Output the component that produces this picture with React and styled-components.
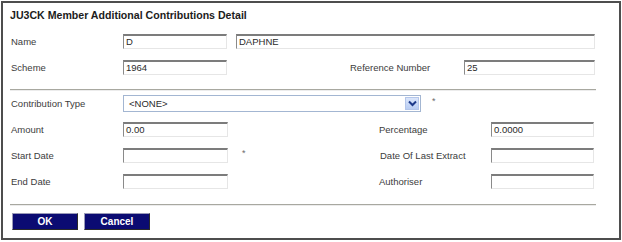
import React from 'react';
import styled, { createGlobalStyle } from 'styled-components';

const GlobalStyle = createGlobalStyle`
  body {
    margin: 0;
    background: #ffffff;
    font-family: "Liberation Sans", Arial, sans-serif;
  }
`;

const Frame = styled.div`
  box-sizing: border-box;
  width: 620px;
  height: 239px;
  margin: 1px 0 0 1px;
  border: 2px solid #4e4e4e;
  padding: 0 0 0 7px;
  background: #ffffff;
`;

const Title = styled.div`
  height: 25px;
  line-height: 25px;
  font-size: 10.6px;
  font-weight: bold;
  color: #1c1c1c;
`;

const Row = styled.div`
  display: flex;
  align-items: center;
  height: ${p => p.h || 26}px;
`;

const Label = styled.div`
  width: ${p => p.w}px;
  flex-shrink: 0;
  font-size: 9.5px;
  color: #3c3c3c;
  padding-left: ${p => p.pl || 1}px;
  box-sizing: border-box;
  white-space: nowrap;
`;

const Input = styled.div`
  box-sizing: border-box;
  width: ${p => p.w}px;
  height: 15px;
  flex-shrink: 0;
  margin-right: ${p => p.mr || 0}px;
  background: #ffffff;
  border-top: 2px solid #7c7c7c;
  border-left: 1px solid #8a8a8a;
  border-right: 1px solid #e6e6e6;
  border-bottom: 1px solid #e6e6e6;
  font-size: 9.5px;
  line-height: 12px;
  padding-left: 2px;
  color: #2a2a2a;
`;

const Select = styled.div`
  box-sizing: border-box;
  width: 298px;
  height: 17px;
  flex-shrink: 0;
  display: flex;
  align-items: center;
  border: 1px solid #a3b6d2;
  background: #ffffff;
  padding: 1px;
`;

const SelectText = styled.div`
  flex: 1;
  font-size: 9.5px;
  color: #2a2a2a;
  padding-left: 4px;
`;

const SelectButton = styled.div`
  width: 14px;
  height: 13px;
  display: flex;
  align-items: center;
  justify-content: center;
  background: linear-gradient(#dbe6fb, #b9cdf3);
  border: 1px solid #b4c6ea;
  box-sizing: border-box;
`;

const Star = styled.div`
  width: ${p => p.w}px;
  flex-shrink: 0;
  font-size: 9px;
  color: #6a6a6a;
  padding-left: ${p => p.pl}px;
  box-sizing: border-box;
  margin-top: -5px;
`;

const Separator = styled.div`
  width: 586px;
  height: 1px;
  background: #a8a8a0;
  border-bottom: 1px solid #ececec;
  margin-top: ${p => p.mt}px;
`;

const Buttons = styled.div`
  display: flex;
  gap: 6px;
  margin-top: 7px;
  padding-left: 2px;
`;

const Button = styled.div`
  box-sizing: border-box;
  width: 66px;
  height: 17px;
  display: flex;
  align-items: center;
  justify-content: center;
  background: #0b0b72;
  border: 1px solid;
  border-color: #9a9ab8 #2a2a2a #2a2a2a #9a9ab8;
  color: #ffffff;
  font-size: 10px;
  font-weight: bold;
`;

const Chevron = () => (
  <svg width="9" height="7" viewBox="0 0 9 7">
    <path d="M1 1.5 L4.5 5 L8 1.5" fill="none" stroke="#1d3a8a" strokeWidth="2" />
  </svg>
);

export default function App() {
  return (
    <>
      <GlobalStyle />
      <Frame>
        <Title>JU3CK Member Additional Contributions Detail</Title>
        <Row>
          <Label w={113}>Name</Label>
          <Input w={104} mr={9}>D</Input>
          <Input w={359}>DAPHNE</Input>
        </Row>
        <Row>
          <Label w={113}>Scheme</Label>
          <Input w={104}>1964</Input>
          <Label w={237} pl={123}>Reference Number</Label>
          <Input w={131}>25</Input>
        </Row>
        <Separator mt={9} />
        <Row h={25}>
          <Label w={113}>Contribution Type</Label>
          <Select>
            <SelectText>&lt;NONE&gt;</SelectText>
            <SelectButton><Chevron /></SelectButton>
          </Select>
          <Star w={20} pl={11}>*</Star>
        </Row>
        <Row>
          <Label w={113}>Amount</Label>
          <Input w={105}>0.00</Input>
          <Label w={263} pl={151}>Percentage</Label>
          <Input w={103}>0.0000</Input>
        </Row>
        <Row>
          <Label w={113}>Start Date</Label>
          <Input w={105}></Input>
          <Star w={151} pl={14}>*</Star>
          <Label w={112}>Date Of Last Extract</Label>
          <Input w={103}></Input>
        </Row>
        <Row>
          <Label w={113}>End Date</Label>
          <Input w={105}></Input>
          <Label w={263} pl={151}>Authoriser</Label>
          <Input w={103}></Input>
        </Row>
        <Separator mt={10} />
        <Buttons>
          <Button>OK</Button>
          <Button>Cancel</Button>
        </Buttons>
      </Frame>
    </>
  );
}
